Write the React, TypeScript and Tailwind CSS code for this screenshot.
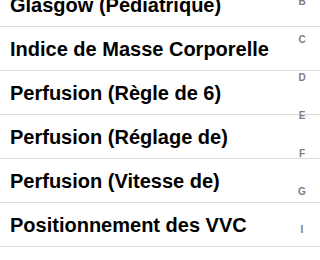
import React from "react";

const rows = [
  "Glasgow (Pédiatrique)",
  "Indice de Masse Corporelle",
  "Perfusion (Règle de 6)",
  "Perfusion (Réglage de)",
  "Perfusion (Vitesse de)",
  "Positionnement des VVC",
];

const index = ["B", "C", "D", "E", "F", "G", "I"];

const App = () => {
  return (
    <div
      className="relative w-[320px] h-[260px] overflow-hidden bg-white"
      style={{ fontFamily: '"Liberation Sans", Arial, sans-serif' }}
    >
      <div className="-mt-[17px]">
        {rows.map((r) => (
          <div
            key={r}
            className="h-[44px] flex items-center pl-[10px] border-b border-[#dcdcdc] text-[20px] font-bold text-black"
          >
            {r}
          </div>
        ))}
      </div>
      <div className="absolute right-[12px] top-[-18px] flex flex-col items-center w-[12px]">
        {index.map((l) => (
          <div
            key={l}
            className="h-[38px] flex items-center justify-center text-[10px] font-bold text-[#7d7d84]"
          >
            {l}
          </div>
        ))}
      </div>
    </div>
  );
};

export default App;
